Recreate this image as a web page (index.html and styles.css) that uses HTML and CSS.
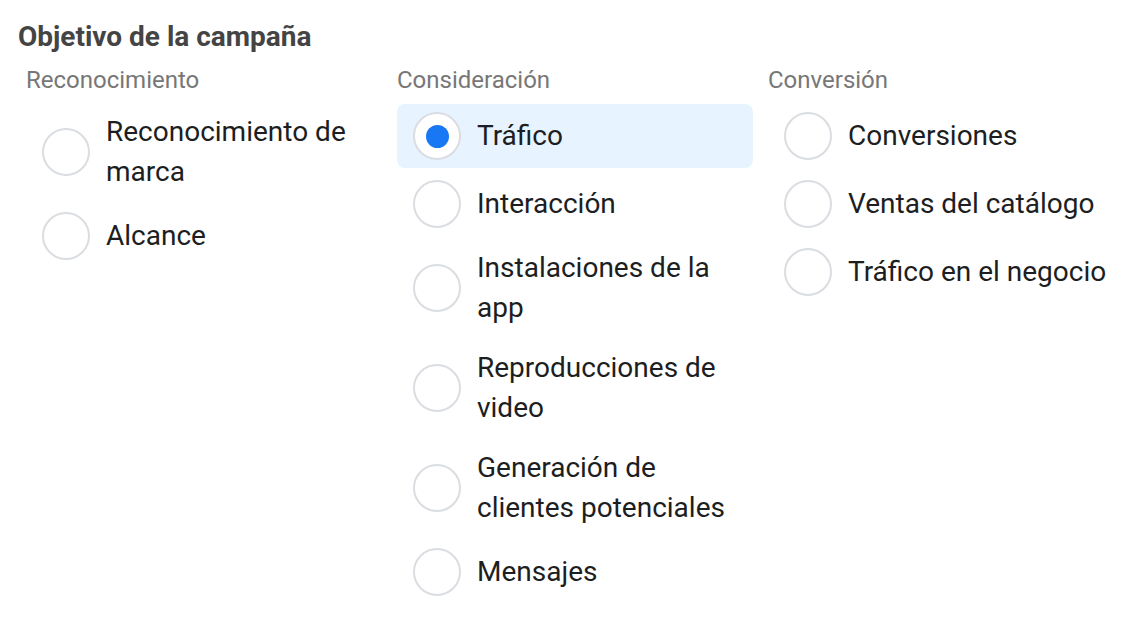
FILE: index.html
```html
<!DOCTYPE html>
<html lang="es">
<head>
<meta charset="utf-8">
<title>Objetivo de la campaña</title>
<link rel="stylesheet" href="styles.css">
</head>
<body>
<div class="page">
  <h1 class="title">Objetivo de la campaña</h1>
  <div class="cols">
    <div class="col">
      <div class="col-head">Reconocimiento</div>
      <div class="opts">
        <div class="opt"><span class="radio"></span><span class="label">Reconocimiento de marca</span></div>
        <div class="opt"><span class="radio"></span><span class="label">Alcance</span></div>
      </div>
    </div>
    <div class="col">
      <div class="col-head">Consideración</div>
      <div class="opts">
        <div class="opt selected"><span class="radio"><span class="dot"></span></span><span class="label">Tráfico</span></div>
        <div class="opt"><span class="radio"></span><span class="label">Interacción</span></div>
        <div class="opt"><span class="radio"></span><span class="label">Instalaciones de la app</span></div>
        <div class="opt"><span class="radio"></span><span class="label">Reproducciones de video</span></div>
        <div class="opt"><span class="radio"></span><span class="label">Generación de clientes potenciales</span></div>
        <div class="opt"><span class="radio"></span><span class="label">Mensajes</span></div>
      </div>
    </div>
    <div class="col">
      <div class="col-head">Conversión</div>
      <div class="opts">
        <div class="opt"><span class="radio"></span><span class="label">Conversiones</span></div>
        <div class="opt"><span class="radio"></span><span class="label">Ventas del catálogo</span></div>
        <div class="opt"><span class="radio"></span><span class="label">Tráfico en el negocio</span></div>
      </div>
    </div>
  </div>
</div>
</body>
</html>
```

FILE: styles.css
```css
html, body {
  margin: 0;
  padding: 0;
  background: #ffffff;
}
body {
  font-family: Roboto, "Liberation Sans", Arial, sans-serif;
  color: #1c1e21;
}
.page {
  padding: 21px 0 0 18px;
}
.title {
  margin: 0;
  font-size: 28px;
  line-height: 32px;
  font-weight: 700;
  color: #444444;
}
.cols {
  display: grid;
  grid-template-columns: 356px 356px 1fr;
  column-gap: 15px;
  margin-top: 13px;
  padding-left: 8px;
}
.col-head {
  font-size: 24px;
  line-height: 28px;
  color: #777777;
  margin-bottom: 10px;
}
.opts {
  display: flex;
  flex-direction: column;
  gap: 4px;
}
.opt {
  display: flex;
  align-items: center;
  gap: 16px;
  padding: 8px 16px;
  border-radius: 8px;
}
.opt.selected {
  background: #e7f3ff;
}
.radio {
  flex: none;
  width: 48px;
  height: 48px;
  box-sizing: border-box;
  border: 2px solid #dadde1;
  border-radius: 50%;
  background: #ffffff;
  display: flex;
  align-items: center;
  justify-content: center;
}
.dot {
  width: 23px;
  height: 23px;
  border-radius: 50%;
  background: #1877f2;
}
.label {
  font-size: 28px;
  line-height: 40px;
  color: #1c1e21;
}
```
